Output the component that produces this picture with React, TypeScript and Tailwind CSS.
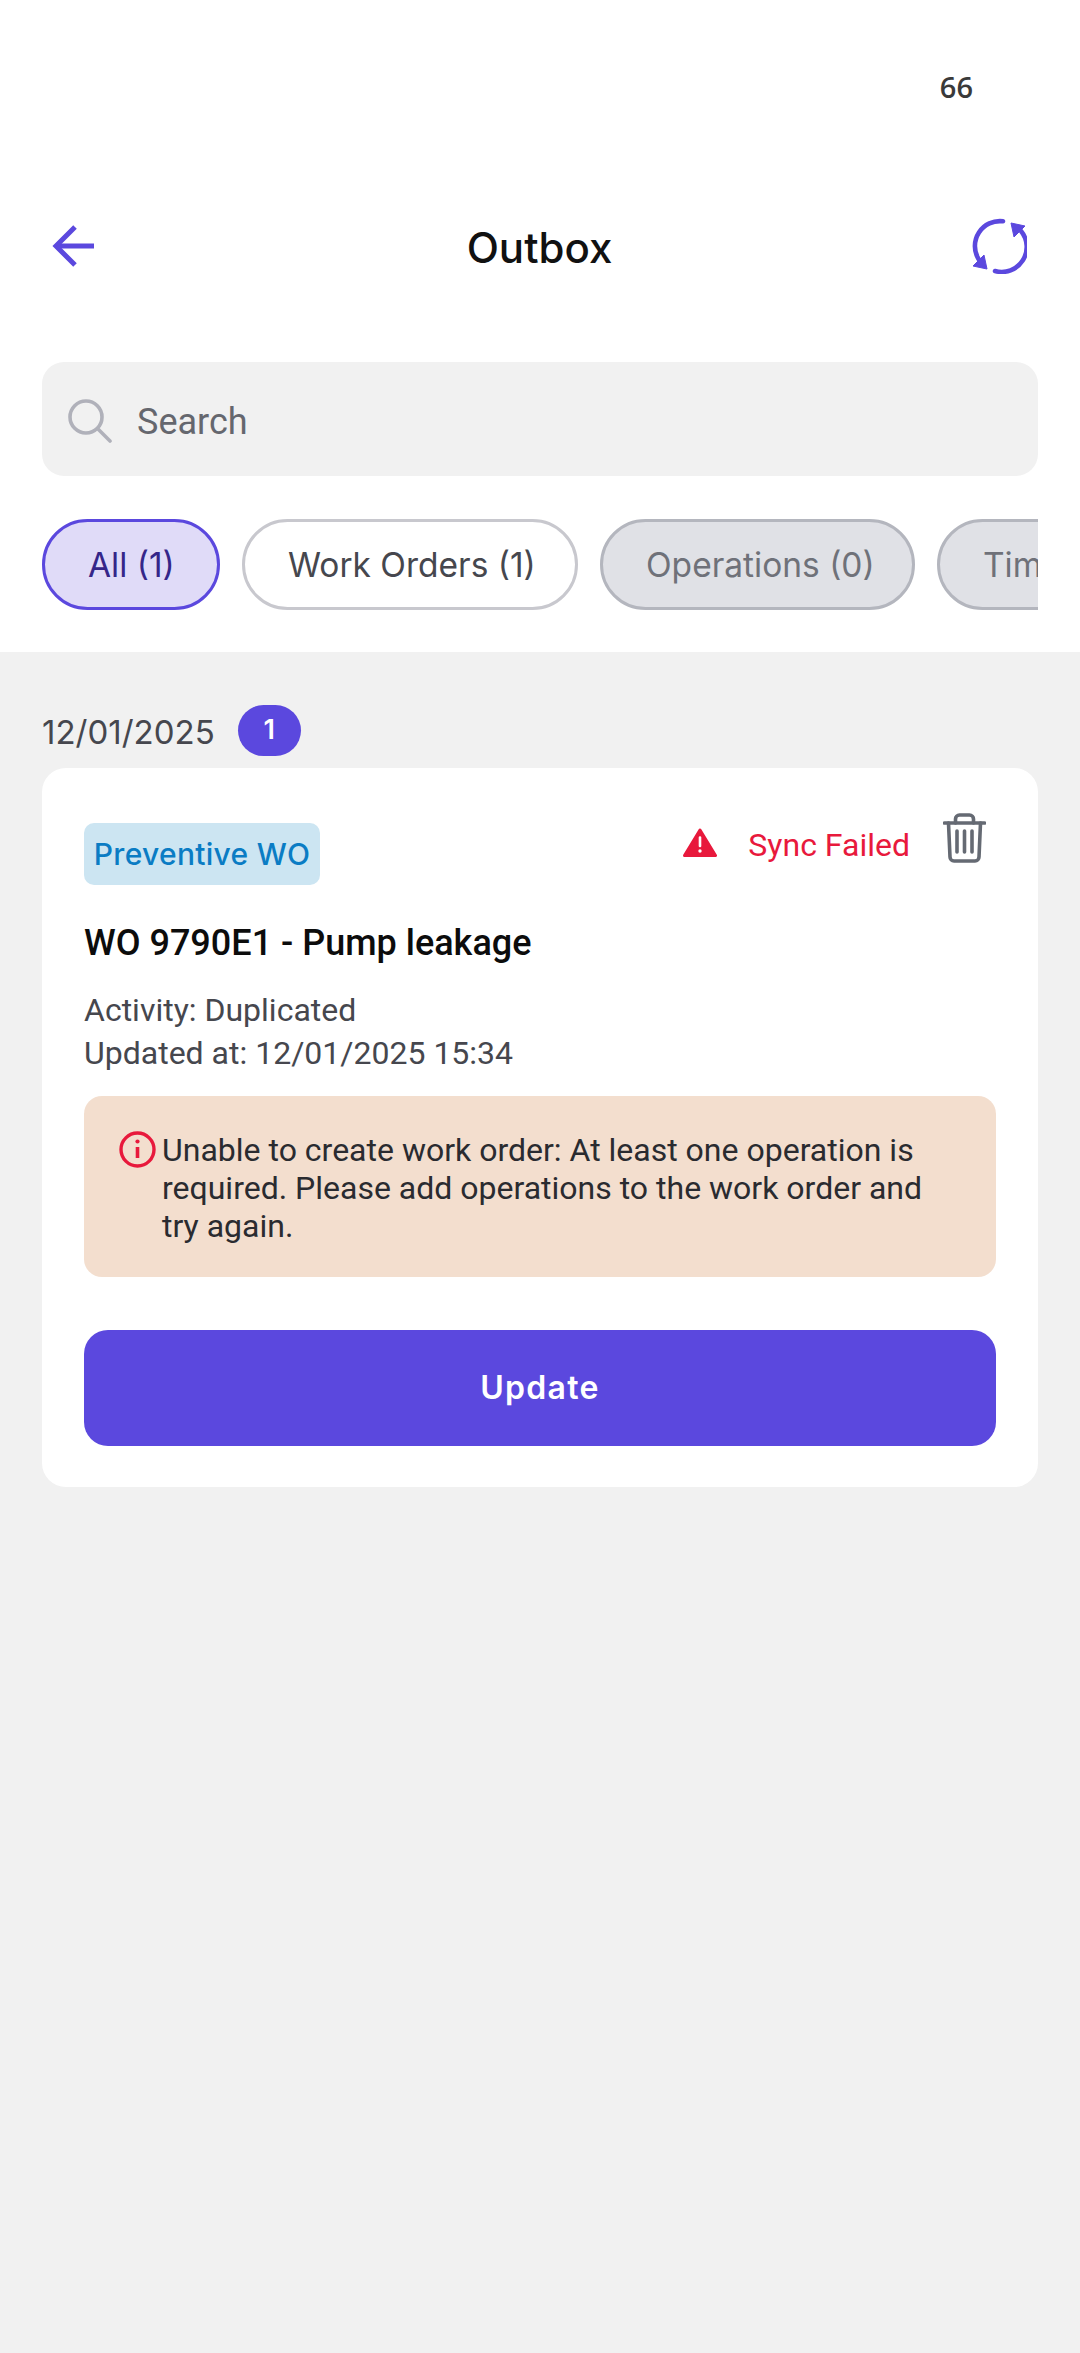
import React from "react";

const roboto = "font-['Roboto',sans-serif]";
const inter = "font-['Inter',sans-serif]";

const chips = [
  { label: "All (1)", className: "bg-[#e0dbf8] border-[#5b48de] text-[#352689] w-[178px]" },
  { label: "Work Orders (1)", className: "bg-white border-[#c8c8ce] text-[#46474e] w-[336px]" },
  { label: "Operations (0)", className: "bg-[#e0e1e6] border-[#b4b6be] text-[#6f7179] w-[315px]" },
  { label: "Time Confirmations (0)", className: "bg-[#e0e1e6] border-[#b4b6be] text-[#6f7179] w-[440px]" },
];

const App: React.FC = () => {
  return (
    <div className={`w-[1080px] h-[2353px] bg-[#f1f1f1] overflow-hidden ${roboto}`}>
      <div className="bg-white h-[652px]">
        {/* Status bar */}
        <div className="h-[174px] flex justify-end pt-[68px] pr-[107px]">
          <span className="font-['Open_Sans',sans-serif] font-semibold text-[29px] leading-[38px] text-[#3a3a3a]">66</span>
        </div>

        {/* Nav */}
        <div className="h-[144px] flex items-center justify-between pl-[52px] pr-[53px]">
          <div className="w-[56px]">
            <svg width="45" height="42" viewBox="0 0 45 42" fill="none" stroke="#5b48de" strokeWidth="5">
              <path d="M42 21H4" />
              <path d="M23 2 4 21 23 40" />
            </svg>
          </div>
          <h1 className={`text-[42px] leading-[50px] font-medium text-[#111] mt-[3px] ${inter}`}>Outbox</h1>
          <svg width="56" height="56" viewBox="0 0 56 56" fill="none">
            <path d="M32 3.300A25 25 0 0 0 7.500 41" stroke="#5b48de" strokeWidth="4.600" strokeLinecap="round" />
            <path d="M24 53A25 25 0 0 0 50 13" stroke="#5b48de" strokeWidth="4.600" strokeLinecap="round" />
            <path d="M2 48 16 51 13 37Z" fill="#5b48de" stroke="#5b48de" strokeWidth="1" strokeLinejoin="round" />
            <path d="M40 5 54 8 43 19Z" fill="#5b48de" stroke="#5b48de" strokeWidth="1" strokeLinejoin="round" />
          </svg>
        </div>

        {/* Search */}
        <div className="mt-[44px] mx-[42px] h-[114px] bg-[#f1f1f1] rounded-[22px] flex items-center pl-[26px]">
          <svg width="44" height="44" viewBox="0 0 44 44" fill="none" stroke="#b0b1ba" strokeWidth="3.600" strokeLinecap="round" className="mt-[4px]">
            <circle cx="18" cy="18" r="16" />
            <path d="M30 30 42 42" />
          </svg>
          <span className="ml-[25px] text-[36px] leading-[44px] text-[#65676e] mt-[5px]">Search</span>
        </div>

        {/* Filter chips */}
        <div className="mt-[43px] mx-[42px] h-[91px] flex gap-[22px] overflow-hidden">
          {chips.map((chip) => (
            <div
              key={chip.label}
              className={`shrink-0 h-[91px] rounded-full border-[3px] flex items-center pl-[43px] text-[33.5px] leading-[40px] whitespace-nowrap ${inter} ${chip.className}`}
            >
              {chip.label}
            </div>
          ))}
        </div>
      </div>

      <div className="px-[42px] pt-[53px]">
        {/* Date */}
        <div className="h-[51px] flex items-center">
          <span className={`text-[33px] leading-[40px] text-[#46474e] mt-[2px] ${inter}`}>12/01/2025</span>
          <span className={`ml-[23px] w-[63px] h-[51px] rounded-full bg-[#5b48de] text-white text-[27px] font-semibold flex items-center justify-center ${inter}`}>1</span>
        </div>

        {/* Card */}
        <div className="mt-[12px] bg-white rounded-[24px] px-[42px] pt-[55px] pb-[41px]">
          <div className="flex justify-between items-start">
            <span className={`h-[62px] w-[236px] rounded-[10px] bg-[#cce5f2] text-[#0a7cc4] text-[30px] font-medium tracking-[0.3px] flex items-center justify-center whitespace-nowrap ${inter}`}>
              Preventive WO
            </span>
            <div className="flex items-start mr-[10px] -mt-[10px]">
              <svg width="34" height="30" viewBox="0 0 34 30" className="mt-[15px]">
                <path d="M17 2 32.500 27.500H1.500Z" fill="#e8193c" stroke="#e8193c" strokeWidth="3" strokeLinejoin="round" />
                <path d="M17 9.500V18" stroke="#fff" strokeWidth="2.600" strokeLinecap="round" />
                <circle cx="17" cy="23" r="1.700" fill="#fff" />
              </svg>
              <span className="ml-[31px] text-[32px] leading-[40px] text-[#e8193c] mt-[12px]">Sync Failed</span>
              <svg width="43" height="50" viewBox="0 0 43 50" fill="none" stroke="#656a73" strokeWidth="3.600" strokeLinecap="round" className="ml-[33px]">
                <path d="M1.500 10H41.500" />
                <path d="M12.500 10V6a4 4 0 0 1 4-4h10a4 4 0 0 1 4 4v4" />
                <path d="M5.500 10 7 44a4 4 0 0 0 4 4h21a4 4 0 0 0 4-4l1.500-34" />
                <path d="M14 18V39" />
                <path d="M21.500 18V39" />
                <path d="M29 18V39" />
              </svg>
            </div>
          </div>

          <h2 className="mt-[33px] text-[36px] leading-[50px] font-medium text-[#0c0c0c]">WO 9790E1 - Pump leakage</h2>

          <div className="mt-[21px] text-[32px] leading-[43px] text-[#46474e]">
            <p>Activity: Duplicated</p>
            <p>Updated at: 12/01/2025 15:34</p>
          </div>

          {/* Error message */}
          <div className="mt-[21px] h-[181px] bg-[#f3dece] rounded-[18px] flex items-start pl-[35px] pr-[44px] pt-[35px]">
            <svg width="37" height="37" viewBox="0 0 37 37" fill="none" className="shrink-0">
              <circle cx="18.500" cy="18.500" r="16.500" stroke="#e8193c" strokeWidth="3.400" />
              <path d="M18.500 16V27" stroke="#e8193c" strokeWidth="3.600" />
              <circle cx="18.500" cy="10.500" r="2.100" fill="#e8193c" />
            </svg>
            <p className="ml-[6px] text-[32px] leading-[38px] text-[#2a2b30]">
              Unable to create work order: At least one operation is required. Please add operations to the work order and try again.
            </p>
          </div>

          <button className={`mt-[53px] w-full h-[116px] rounded-[24px] bg-[#5b48de] text-white text-[32px] font-semibold tracking-[1.3px] ${inter}`}>
            Update
          </button>
        </div>
      </div>
    </div>
  );
};

export default App;
